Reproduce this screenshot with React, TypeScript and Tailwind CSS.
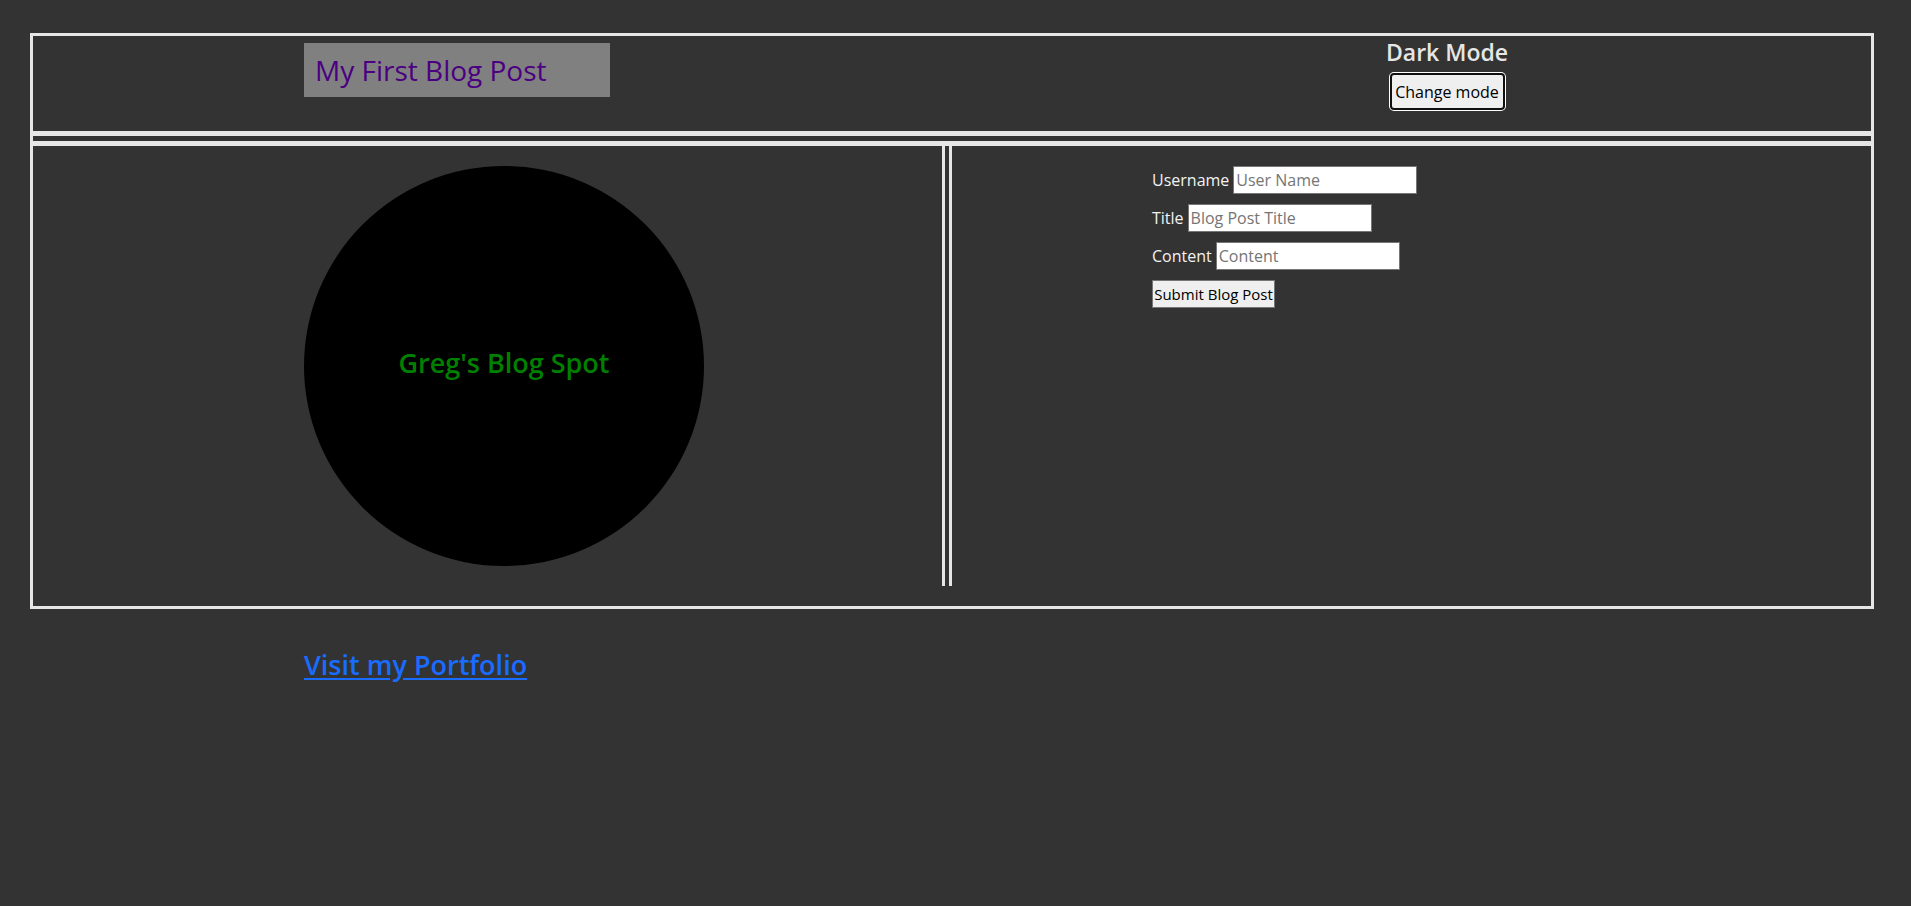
import { useState } from "react";

function BlogForm() {
    const [username, setUsername] = useState("");
    const [title, setTitle] = useState("");
    const [content, setContent] = useState("");

    const inputClass =
        "h-[28px] w-[184px] border border-[#767676] bg-white px-[2px] text-[16px] text-black placeholder:text-[#757575] outline-none";

    return (
        <form className="flex flex-col gap-[10px] text-[16px] text-[#f2f2f2]" onSubmit={(e) => e.preventDefault()}>
            <div className="flex items-center gap-[4px]">
                <label htmlFor="username">Username</label>
                <input
                    id="username"
                    className={inputClass}
                    placeholder="User Name"
                    value={username}
                    onChange={(e) => setUsername(e.currentTarget.value)}
                />
            </div>
            <div className="flex items-center gap-[4px]">
                <label htmlFor="title">Title</label>
                <input
                    id="title"
                    className={inputClass}
                    placeholder="Blog Post Title"
                    value={title}
                    onChange={(e) => setTitle(e.currentTarget.value)}
                />
            </div>
            <div className="flex items-center gap-[4px]">
                <label htmlFor="content">Content</label>
                <input
                    id="content"
                    className={inputClass}
                    placeholder="Content"
                    value={content}
                    onChange={(e) => setContent(e.currentTarget.value)}
                />
            </div>
            <div>
                <button
                    type="submit"
                    className="h-[28px] w-[123px] border border-[#767676] bg-[#efefef] text-[15px] leading-none text-black"
                >
                    Submit Blog Post
                </button>
            </div>
        </form>
    );
}

export default function App() {
    const [dark, setDark] = useState(true);

    return (
        <div
            className={
                "min-h-[906px] w-full pl-[30px] pt-[33px] font-['Open_Sans','Noto_Sans',sans-serif] " +
                (dark ? "bg-[#333333]" : "bg-white")
            }
        >
            <div className="w-[1844px] border-[3px] border-[#e6e6e6]">
                <header className="flex h-[100px] border-b-[5px] border-[#e6e6e6]">
                    <div className="ml-[271px] mt-[7px] flex h-[54px] w-[306px] items-center bg-[#808080] pl-[11px]">
                        <h1 className="text-[28px] leading-none text-[#4b0082]">My First Blog Post</h1>
                    </div>
                    <div className="ml-[737px] flex w-[200px] flex-col items-center pt-[4px]">
                        <h2 className="text-[23px] font-semibold leading-[24px] text-[#e6e6e6]">Dark Mode</h2>
                        <button
                            className="mt-[9px] h-[37px] w-[115px] rounded-[4px] border-2 border-[#101010] bg-[#efefef] text-[16px] text-black ring-1 ring-white"
                            onClick={() => setDark(!dark)}
                        >
                            Change mode
                        </button>
                    </div>
                </header>
                <div className="mt-[5px] flex border-t-[5px] border-[#e6e6e6] pb-[20px]">
                    <section className="h-[440px] w-[912px] border-r-[3px] border-[#e6e6e6] pl-[271px] pt-[20px]">
                        <div className="flex h-[400px] w-[400px] items-center justify-center rounded-full bg-black">
                            <span className="mb-[6px] text-[27px] font-semibold text-[#008000]">Greg's Blog Spot</span>
                        </div>
                    </section>
                    <section className="ml-[4px] h-[440px] flex-1 border-l-[3px] border-[#e6e6e6] pl-[200px] pt-[20px]">
                        <BlogForm />
                    </section>
                </div>
            </div>
            <div className="ml-[274px] mt-[38px]">
                <a
                    href="#"
                    className="text-[27px] font-semibold leading-[36px] text-[#1a6cff] underline underline-offset-[3px]"
                >
                    Visit my Portfolio
                </a>
            </div>
        </div>
    );
}
